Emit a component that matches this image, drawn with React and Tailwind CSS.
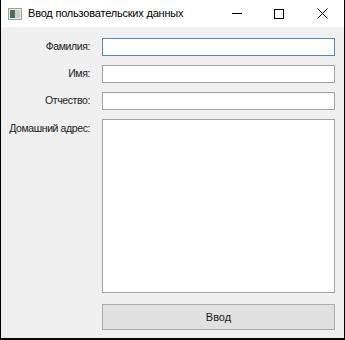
import React from 'react';

const font = { fontFamily: '"Liberation Sans", Arial, sans-serif' };

const Field = ({ label, focused }) => (
  <div className="flex items-center h-[18px]">
    <label className="w-[90px] text-right text-[10.5px] tracking-[-0.4px] text-[#1a1a1a] whitespace-nowrap pr-[1px]">{label}</label>
    <input
      type="text"
      className={
        'ml-[11px] w-[233px] h-[18px] bg-white outline-none border ' +
        (focused ? 'border-[#4f8ab8]' : 'border-[#a3a3a3]')
      }
    />
  </div>
);

export default function App() {
  return (
    <div className="w-[345px] h-[340px] flex flex-col bg-[#f0f0f0] border-x border-b-2 border-black" style={font}>
      <div className="h-[27px] bg-white flex items-center shrink-0">
        <svg width="14" height="12" viewBox="0 0 14 12" className="ml-[7px]">
          <rect x="0.5" y="0.5" width="13" height="11" fill="#e9ece9" stroke="#9aa39c" />
          <rect x="2" y="2" width="5" height="8" fill="#4f6f5c" />
          <rect x="7" y="2" width="5" height="8" fill="#c9d2cb" />
        </svg>
        <span className="ml-[6px] text-[11px] tracking-[-0.2px] text-black">Ввод пользовательских данных</span>
        <div className="ml-auto flex h-full">
          <div className="w-[42px] flex items-center justify-center">
            <div className="w-[10px] h-[1px] bg-black" />
          </div>
          <div className="w-[42px] flex items-center justify-center">
            <div className="w-[10px] h-[10px] border border-black" />
          </div>
          <div className="w-[44px] flex items-center justify-center">
            <svg width="11" height="11" viewBox="0 0 11 11">
              <path d="M0.5 0.5 L10.5 10.5 M10.5 0.5 L0.5 10.5" stroke="#000" strokeWidth="1" />
            </svg>
          </div>
        </div>
      </div>
      <div className="flex flex-col pt-[11px] gap-[9px]">
        <Field label="Фамилия:" focused />
        <Field label="Имя:" />
        <Field label="Отчество:" />
        <div className="flex">
          <label className="w-[90px] text-right text-[10.5px] tracking-[-0.4px] text-[#1a1a1a] whitespace-nowrap pr-[1px] leading-[18px]">Домашний адрес:</label>
          <textarea className="ml-[11px] w-[233px] h-[174px] bg-white outline-none border border-[#a3a3a3] resize-none" />
        </div>
        <div className="flex pt-[2px]">
          <button className="ml-[101px] w-[233px] h-[26px] bg-[#e1e1e1] border border-[#adadad] text-[11px] text-[#1a1a1a]">
            Ввод
          </button>
        </div>
      </div>
    </div>
  );
}
